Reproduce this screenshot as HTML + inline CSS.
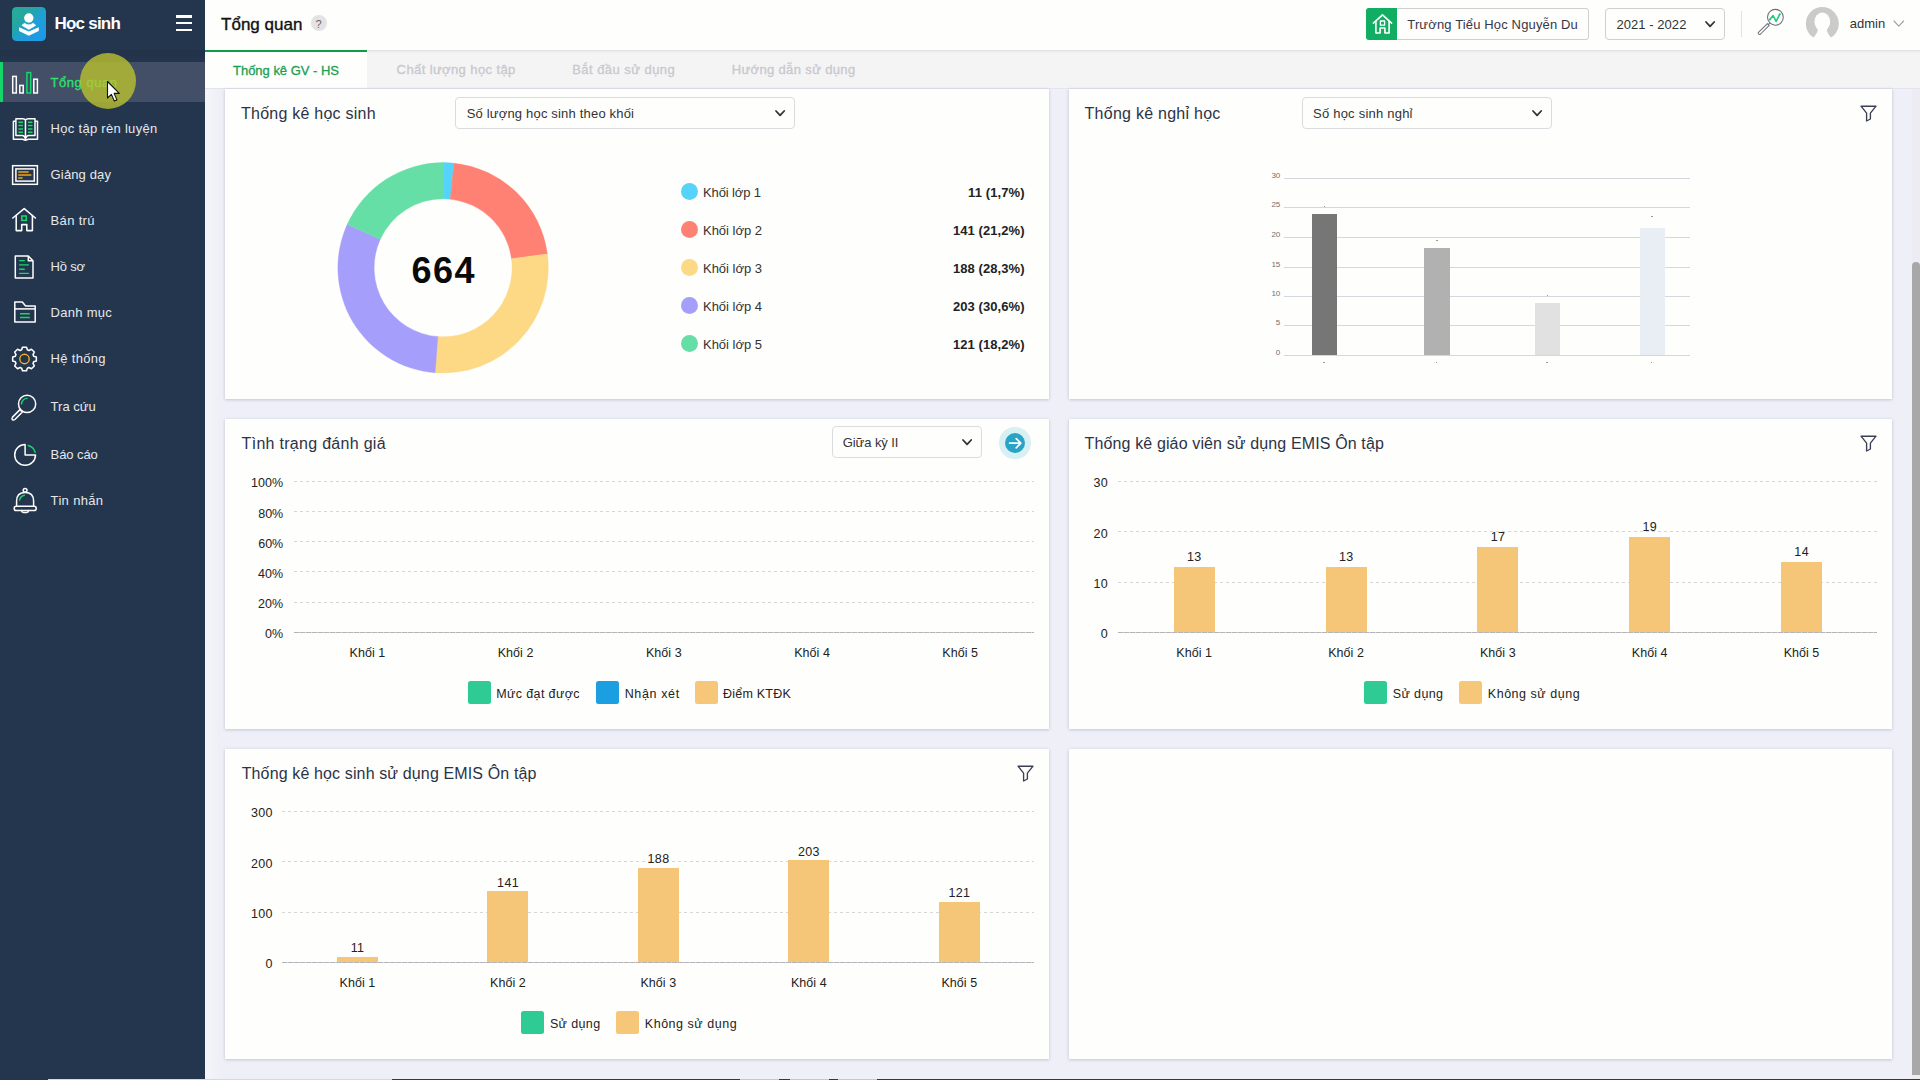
<!DOCTYPE html><html><head><meta charset="utf-8"><title>Tổng quan</title><style>
*{box-sizing:border-box;margin:0;padding:0}
html,body{width:1920px;height:1080px;overflow:hidden;background:#eff0f7;font-family:"Liberation Sans",sans-serif;}
.t{position:absolute;white-space:nowrap;}
.a{position:absolute;}
.card{position:absolute;background:#fefefc;box-shadow:0 1px 3px rgba(100,105,140,.26),0 0 3px rgba(100,105,140,.10);}
.dd{position:absolute;background:#fefefc;border:1px solid #dcdce0;border-radius:4px;}
svg{position:absolute;overflow:visible}
</style></head><body>
<div class="a" style="left:205px;top:0;width:1715px;height:50px;background:#fefefc;"></div>
<div class="a" style="left:205px;top:50px;width:1715px;height:38px;background:#f4f4f5;box-shadow:inset 0 3px 3px -2px rgba(0,0,0,.11);"></div>
<div class="a" style="left:205px;top:88px;width:1715px;height:1px;background:#e4e4f0;"></div>
<div class="a" style="left:205px;top:50px;width:162px;height:38px;background:#fefefc;border-top:2px solid #0a9d4c;"></div>
<div class="t" style="left:233.00px;top:63px;font-size:13px;line-height:15px;color:#1c9e54;font-weight:400;letter-spacing:-0.015px;-webkit-text-stroke:0.3px #1c9e54;">Thống kê GV - HS</div>
<div class="t" style="left:396.60px;top:62px;font-size:13px;line-height:15px;color:#c8c8cd;font-weight:400;letter-spacing:0.400px;-webkit-text-stroke:0.3px #c8c8cd;">Chất lượng học tập</div>
<div class="t" style="left:572.20px;top:62px;font-size:13px;line-height:15px;color:#c8c8cd;font-weight:400;letter-spacing:0.459px;-webkit-text-stroke:0.3px #c8c8cd;">Bắt đầu sử dụng</div>
<div class="t" style="left:731.70px;top:62px;font-size:13px;line-height:15px;color:#c8c8cd;font-weight:400;letter-spacing:0.360px;-webkit-text-stroke:0.3px #c8c8cd;">Hướng dẫn sử dụng</div>
<div class="t" style="left:221.00px;top:15px;font-size:17px;line-height:19px;color:#111;font-weight:400;letter-spacing:0.025px;-webkit-text-stroke:0.35px #111;">Tổng quan</div>
<div class="a" style="left:310.5px;top:15px;width:16px;height:16px;border-radius:50%;background:#e3e3e5;"></div>
<div class="t" style="left:18.60px;width:600px;text-align:center;top:18px;font-size:11px;line-height:12px;color:#666;font-weight:400;">?</div>
<div class="a" style="left:1365.5px;top:8px;width:223px;height:31.5px;border:1px solid #cfcfd4;border-radius:3px;background:#fefefc;"></div>
<div class="a" style="left:1365.5px;top:8px;width:31.5px;height:31.5px;border-radius:3px 0 0 3px;background:#10ad62;"></div>
<svg style="left:1371.6px;top:13px" width="21" height="22" viewBox="0 0 21 22" fill="none" stroke="#fff" stroke-width="1.6" stroke-linejoin="round" stroke-linecap="round">
<path d="M1.4 10.2 L10.5 1.9 L19.6 10.2"/><path d="M3.9 8.6 V20 H8.1 V15 H12.9 V20 H17.1 V8.6"/><rect x="8.4" y="8" width="4.2" height="4.2" stroke-width="1.3"/></svg>
<div class="t" style="left:1407.30px;top:17px;font-size:13px;line-height:15px;color:#383848;font-weight:400;letter-spacing:0.144px;">Trường Tiểu Học Nguyễn Du</div>
<div class="a" style="left:1605px;top:8px;width:119.5px;height:31.5px;border:1px solid #cfcfd4;border-radius:4px;background:#fefefc;"></div>
<div class="t" style="left:1616.40px;top:17px;font-size:13px;line-height:15px;color:#333;font-weight:400;letter-spacing:0.059px;">2021 - 2022</div>
<svg style="left:1703.9px;top:20.0px" width="12.2" height="8.4" viewBox="-2 -2 12.2 8.4" fill="none" stroke="#333" stroke-width="1.8" stroke-linecap="round" stroke-linejoin="round"><path d="M0 0 L4.1 4.4 L8.2 0"/></svg>
<div class="a" style="left:1741px;top:11px;width:1px;height:26px;background:#e2e2e6;"></div>
<svg style="left:0;top:0" width="1920" height="50" viewBox="0 0 1920 50" fill="none" stroke-linecap="round" stroke-linejoin="round">
<circle cx="1775.4" cy="17.3" r="7.9" stroke="#70707c" stroke-width="1.05"/>
<path d="M1769.9 23 L1768.3 24.6" stroke="#70707c" stroke-width="1.05"/>
<path d="M1767.4 23.6 L1769.2 25.4 L1760.6 34 Q1759.5 34.9 1758.6 34 Q1757.7 33.1 1758.7 32.2 Z" stroke="#70707c" stroke-width="1.05"/>
<path d="M1769.9 19.6 L1773.1 15.6 L1776.1 21.4 L1779.7 14.3" stroke="#1fcb7c" stroke-width="1.6"/>
<circle cx="1769.9" cy="19.6" r="1" fill="#1fcb7c"/><circle cx="1779.7" cy="14.3" r="1" fill="#1fcb7c"/>
</svg>
<svg style="left:0;top:0" width="1920" height="50" viewBox="0 0 1920 50"><defs><clipPath id="av"><circle cx="1822.3" cy="23.6" r="16.5"/></clipPath></defs>
<circle cx="1822.3" cy="23.6" r="16.5" fill="#cbcbcb"/>
<g fill="#fefefc"><ellipse cx="1822.3" cy="21.8" rx="7.9" ry="9.2"/><path d="M1817.6 28 Q1818.4 33 1812.5 38.4 L1811 42 H1833.6 L1832.1 38.4 Q1826.2 33 1827 28 Z"/>
<rect x="1805" y="38.6" width="35" height="4"/></g></svg>
<div class="t" style="left:1849.70px;top:16px;font-size:13px;line-height:15px;color:#333;font-weight:400;letter-spacing:0.045px;">admin</div>
<svg style="left:1892.3px;top:19.2px" width="13.6" height="9.2" viewBox="-2 -2 13.6 9.2" fill="none" stroke="#a2a2a6" stroke-width="1.15" stroke-linecap="round" stroke-linejoin="round"><path d="M0 0 L4.8 5.2 L9.6 0"/></svg>
<div class="a" style="left:0;top:0;width:205px;height:1080px;background:#24364e;"></div>
<div class="a" style="left:0;top:50px;width:205px;height:12px;background:linear-gradient(#213148,#24364e);"></div>
<div class="a" style="left:0;top:62px;width:205px;height:40px;background:#424f66;"></div>
<div class="a" style="left:0;top:62px;width:3px;height:40px;background:#14d66a;"></div>
<svg style="left:12px;top:7px" width="34" height="34" viewBox="0 0 34 34"><defs><linearGradient id="lg" x1="0" y1="0" x2="1" y2="1"><stop offset="0" stop-color="#27ad92"/><stop offset="0.36" stop-color="#25a5a6"/><stop offset="0.56" stop-color="#1f9fd6"/><stop offset="1" stop-color="#1e97ea"/></linearGradient></defs>
<rect width="34" height="34" rx="4.6" fill="url(#lg)"/>
<circle cx="16.8" cy="11" r="4.7" fill="#fefefc"/>
<path d="M10 18.5 Q10 18 10.6 17.6 L12.7 16.2 A6 6 0 0 0 20.9 16.2 L23 17.6 Q23.7 18 23.6 18.5 L16.8 22.5 Z" fill="#fefefc" stroke="#fefefc" stroke-width="0.6" stroke-linejoin="round"/>
<path d="M7 20.2 L16.8 24.6 L26.8 20.2 V24 L16.8 28.7 L7 24 Z" fill="#fefefc"/>
</svg>
<div class="t" style="left:54.40px;top:14px;font-size:17px;line-height:19px;color:#fdfdfd;font-weight:700;letter-spacing:-0.757px;">Học sinh</div>
<div class="a" style="left:176px;top:15px;width:16px;height:2.5px;background:#fdfdfd;"></div>
<div class="a" style="left:176px;top:21.8px;width:16px;height:2.5px;background:#fdfdfd;"></div>
<div class="a" style="left:176px;top:28.6px;width:16px;height:2.5px;background:#fdfdfd;"></div>
<svg style="left:0;top:0" width="60" height="110" viewBox="0 0 60 110" fill="none" stroke="#fdfdfd" stroke-width="1.5">
<rect x="12.7" y="76.4" width="3.6" height="16.6"/><rect x="19.8" y="85.4" width="3.4" height="7.6"/>
<rect x="26.9" y="72.6" width="3.8" height="20.4" stroke="#14d66a"/><rect x="33.8" y="79.2" width="3.6" height="13.8"/></svg>
<svg style="left:0;top:100px" width="60" height="50" viewBox="0 100 60 50" fill="none" stroke="#fdfdfd" stroke-width="1.5" stroke-linejoin="round">
<path d="M15.7 121.3 H13.4 V139.3 H22.5 L25.45 140.3 L28.4 139.3 H37.5 V121.3 H35.2"/>
<path d="M25.45 120 Q24.6 118.7 22.8 118.7 H15.9 V135.6 H22 Q24.6 135.6 25.45 139.4 Q26.3 135.6 28.9 135.6 H35 V118.7 H28.1 Q26.3 118.7 25.45 120 V139"/>
<g stroke="#14d66a" stroke-width="1.5"><path d="M18.4 122.3H23M18.4 125.6H23M18.4 128.9H23M18.4 132.2H23M27.9 122.3H32.5M27.9 125.6H32.5M27.9 128.9H32.5M27.9 132.2H32.5"/></g></svg>
<svg style="left:0;top:150px" width="60" height="50" viewBox="0 150 60 50" fill="none" stroke="#fdfdfd" stroke-width="1.5">
<rect x="12.6" y="165.7" width="24.8" height="18.6"/><rect x="15.9" y="168.9" width="18.4" height="12.2"/>
<g stroke="#eaa51c" stroke-width="1.5"><path d="M18.2 172H28.7M18.2 175H31.4M18.2 178H22.6"/></g></svg>
<svg style="left:0;top:195px" width="60" height="50" viewBox="0 195 60 50" fill="none" stroke="#fdfdfd" stroke-width="1.55" stroke-linejoin="round" stroke-linecap="round">
<path d="M12.8 218 L24.2 208.6 L35.4 218"/><path d="M16.2 215.6 V230.6 H21.7 V224.6 H26.8 V230.6 H32.4 V215.6"/>
<rect x="21.8" y="216" width="4.4" height="4.4" stroke="#14d66a" stroke-linejoin="miter"/></svg>
<svg style="left:0;top:245px" width="60" height="45" viewBox="0 245 60 45" fill="none" stroke="#fdfdfd" stroke-width="1.5" stroke-linejoin="round">
<path d="M15.3 256.1 H28.3 L33 260.8 V277.9 H15.3 Z"/><path d="M28.3 256.1 V260.8 H33"/>
<g stroke="#14d66a" stroke-width="1.4"><path d="M19.1 260.6H24.8M19.1 264.9H28.9M19.1 269.2H24.8M19.1 273.4H28.9"/></g></svg>
<svg style="left:0;top:290px" width="60" height="45" viewBox="0 290 60 45" fill="none" stroke="#fdfdfd" stroke-width="1.5" stroke-linejoin="round">
<path d="M14.8 301.9 H22.3 L25.6 305.9 H35.2 V322.1 H14.8 Z"/><path d="M14.8 308.9 H35.2"/>
<g stroke="#14d66a" stroke-width="1.4"><path d="M20 313.7H29.8M20 317.5H29.8"/></g></svg>
<svg style="left:0;top:335px" width="60" height="50" viewBox="0 335 60 50" fill="none" stroke="#fdfdfd" stroke-width="1.55" stroke-linejoin="round">
<path d="M21.66 349.83 L22.47 347.17 L26.53 347.17 L27.34 349.83 L28.98 350.51 L31.43 349.20 L34.30 352.07 L32.99 354.52 L33.67 356.16 L36.33 356.97 L36.33 361.03 L33.67 361.84 L32.99 363.48 L34.30 365.93 L31.43 368.80 L28.98 367.49 L27.34 368.17 L26.53 370.83 L22.47 370.83 L21.66 368.17 L20.02 367.49 L17.57 368.80 L14.70 365.93 L16.01 363.48 L15.33 361.84 L12.67 361.03 L12.67 356.97 L15.33 356.16 L16.01 354.52 L14.70 352.07 L17.57 349.20 L20.02 350.51 Z"/><circle cx="24.5" cy="359" r="4.7" stroke="#f0b323" stroke-width="1.4"/></svg>
<svg style="left:0;top:385px" width="60" height="45" viewBox="0 385 60 45" fill="none" stroke="#fdfdfd" stroke-width="1.5" stroke-linecap="round">
<circle cx="27.1" cy="403.9" r="8.6"/>
<path d="M20 409.6 L22.4 412 L14.9 419.5 Q13.4 420.6 12.4 419.6 Q11.4 418.6 12.5 417.1 Z" stroke-linejoin="round"/>
<path d="M21.6 403.9 A5.5 5.5 0 0 1 27.1 398.4" stroke="#14d66a" stroke-width="1.4"/></svg>
<svg style="left:0;top:430px" width="60" height="45" viewBox="0 430 60 45" fill="none" stroke="#fdfdfd" stroke-width="1.5" stroke-linecap="round" stroke-linejoin="round">
<path d="M25.1 444.5 A10.4 10.4 0 1 0 35.5 454.9 H25.1 Z"/>
<path d="M28.2 445.5 A10.2 10.2 0 0 1 35.2 452.3" stroke="#14d66a" stroke-width="1.4"/></svg>
<svg style="left:0;top:475px" width="60" height="50" viewBox="0 475 60 50" fill="none" stroke="#fdfdfd" stroke-width="1.5" stroke-linecap="round" stroke-linejoin="round">
<circle cx="25.1" cy="490.3" r="1.9"/>
<path d="M16.6 506.3 V501 Q16.6 492.4 25.1 492.4 Q33.6 492.4 33.6 501 V506.3"/>
<rect x="14.2" y="506.3" width="22" height="4.2" rx="2.1"/>
<path d="M21.6 510.6 Q21.8 512.4 23.4 512.4 H26.8 Q28.4 512.4 28.6 510.6"/>
<path d="M19.6 500 A6 6 0 0 1 24.4 495.2" stroke="#14d66a" stroke-width="1.4"/></svg>
<div class="t" style="left:50.60px;top:75px;font-size:13px;line-height:15px;color:#2fe070;font-weight:400;letter-spacing:0.541px;-webkit-text-stroke:0.3px #2fe070;">Tổng quan</div>
<div class="t" style="left:50.60px;top:121px;font-size:13px;line-height:15px;color:#e6e8ec;font-weight:400;letter-spacing:0.293px;">Học tập rèn luyện</div>
<div class="t" style="left:50.60px;top:167px;font-size:13px;line-height:15px;color:#e6e8ec;font-weight:400;letter-spacing:0.142px;">Giảng dạy</div>
<div class="t" style="left:50.60px;top:213px;font-size:13px;line-height:15px;color:#e6e8ec;font-weight:400;letter-spacing:0.330px;">Bán trú</div>
<div class="t" style="left:50.60px;top:259px;font-size:13px;line-height:15px;color:#e6e8ec;font-weight:400;letter-spacing:-0.191px;">Hồ sơ</div>
<div class="t" style="left:50.60px;top:305px;font-size:13px;line-height:15px;color:#e6e8ec;font-weight:400;letter-spacing:0.279px;">Danh mục</div>
<div class="t" style="left:50.60px;top:351px;font-size:13px;line-height:15px;color:#e6e8ec;font-weight:400;letter-spacing:0.319px;">Hệ thống</div>
<div class="t" style="left:50.60px;top:399px;font-size:13px;line-height:15px;color:#e6e8ec;font-weight:400;letter-spacing:0.023px;">Tra cứu</div>
<div class="t" style="left:50.60px;top:447px;font-size:13px;line-height:15px;color:#e6e8ec;font-weight:400;letter-spacing:-0.084px;">Báo cáo</div>
<div class="t" style="left:50.60px;top:493px;font-size:13px;line-height:15px;color:#e6e8ec;font-weight:400;letter-spacing:0.342px;">Tin nhắn</div>
<div class="a" style="left:79.5px;top:53px;width:56px;height:56px;border-radius:50%;background:rgba(190,196,46,.78);"></div>
<svg style="left:106px;top:80px" width="16" height="24" viewBox="0 0 16 24"><path d="M1.5 1.5 V18 L5.4 14.4 L8.3 21 L10.9 19.9 L8.1 13.4 H13.3 Z" fill="#fff" stroke="#111" stroke-width="1.1" stroke-linejoin="round"/></svg>
<div class="a" style="left:205px;top:89px;width:14px;height:991px;background:linear-gradient(90deg,#f5f5f9,#eff0f7);"></div>
<div class="card" style="left:225px;top:89px;width:824px;height:310px;"></div>
<div class="card" style="left:1069px;top:89px;width:823px;height:310px;"></div>
<div class="card" style="left:225px;top:419px;width:824px;height:310px;"></div>
<div class="card" style="left:1069px;top:419px;width:823px;height:310px;"></div>
<div class="card" style="left:225px;top:749px;width:824px;height:310px;"></div>
<div class="card" style="left:1069px;top:749px;width:823px;height:310px;"></div>
<div class="t" style="left:241.00px;top:105px;font-size:16px;line-height:17px;color:#2c3347;font-weight:400;letter-spacing:0.241px;">Thống kê học sinh</div>
<div class="dd" style="left:455.3px;top:97.3px;width:339.6px;height:31.3px;"></div>
<div class="t" style="left:466.70px;top:106px;font-size:13px;line-height:15px;color:#333;font-weight:400;letter-spacing:0.185px;">Số lượng học sinh theo khối</div>
<svg style="left:774.2px;top:109.0px" width="12.2" height="8.4" viewBox="-2 -2 12.2 8.4" fill="none" stroke="#333" stroke-width="1.8" stroke-linecap="round" stroke-linejoin="round"><path d="M0 0 L4.1 4.4 L8.2 0"/></svg>
<svg style="left:0;top:0" width="1920" height="1080" viewBox="0 0 1920 1080"><path d="M443.10 162.60 A105.2 105.2 0 0 1 454.03 163.17 L450.27 199.17 A69.0 69.0 0 0 0 443.10 198.80 Z" fill="#55d4fb" stroke="#55d4fb" stroke-width="0.4"/><path d="M454.03 163.17 A105.2 105.2 0 0 1 547.38 253.90 L511.50 258.69 A69.0 69.0 0 0 0 450.27 199.17 Z" fill="#fe8173" stroke="#fe8173" stroke-width="0.4"/><path d="M547.38 253.90 A105.2 105.2 0 0 1 435.14 372.70 L437.88 336.60 A69.0 69.0 0 0 0 511.50 258.69 Z" fill="#fdd885" stroke="#fdd885" stroke-width="0.4"/><path d="M435.14 372.70 A105.2 105.2 0 0 1 347.29 224.35 L380.26 239.30 A69.0 69.0 0 0 0 437.88 336.60 Z" fill="#a59efb" stroke="#a59efb" stroke-width="0.4"/><path d="M347.29 224.35 A105.2 105.2 0 0 1 443.10 162.60 L443.10 198.80 A69.0 69.0 0 0 0 380.26 239.30 Z" fill="#65dfa6" stroke="#65dfa6" stroke-width="0.4"/></svg>
<div class="t" style="left:143.83px;width:600px;text-align:center;top:250px;font-size:36px;line-height:41px;color:#0a0a0a;font-weight:700;letter-spacing:1.461px;">664</div>
<div class="a" style="left:680.8px;top:183.3px;width:17px;height:17px;border-radius:50%;background:#55d4fb;"></div>
<div class="t" style="left:703.00px;top:185px;font-size:13px;line-height:15px;color:#333;font-weight:400;letter-spacing:-0.125px;">Khối lớp 1</div>
<div class="t" style="right:895.39px;top:185px;font-size:13px;line-height:15px;color:#222;font-weight:700;letter-spacing:0.105px;">11 (1,7%)</div>
<div class="a" style="left:680.8px;top:221.3px;width:17px;height:17px;border-radius:50%;background:#fe8173;"></div>
<div class="t" style="left:703.00px;top:223px;font-size:13px;line-height:15px;color:#333;font-weight:400;letter-spacing:-0.014px;">Khối lớp 2</div>
<div class="t" style="right:895.43px;top:223px;font-size:13px;line-height:15px;color:#222;font-weight:700;letter-spacing:0.067px;">141 (21,2%)</div>
<div class="a" style="left:680.8px;top:259.3px;width:17px;height:17px;border-radius:50%;background:#fdd885;"></div>
<div class="t" style="left:703.00px;top:261px;font-size:13px;line-height:15px;color:#333;font-weight:400;letter-spacing:-0.014px;">Khối lớp 3</div>
<div class="t" style="right:895.43px;top:261px;font-size:13px;line-height:15px;color:#222;font-weight:700;letter-spacing:0.067px;">188 (28,3%)</div>
<div class="a" style="left:680.8px;top:297.3px;width:17px;height:17px;border-radius:50%;background:#a59efb;"></div>
<div class="t" style="left:703.00px;top:299px;font-size:13px;line-height:15px;color:#333;font-weight:400;letter-spacing:-0.014px;">Khối lớp 4</div>
<div class="t" style="right:895.43px;top:299px;font-size:13px;line-height:15px;color:#222;font-weight:700;letter-spacing:0.067px;">203 (30,6%)</div>
<div class="a" style="left:680.8px;top:335.3px;width:17px;height:17px;border-radius:50%;background:#65dfa6;"></div>
<div class="t" style="left:703.00px;top:337px;font-size:13px;line-height:15px;color:#333;font-weight:400;letter-spacing:-0.014px;">Khối lớp 5</div>
<div class="t" style="right:895.43px;top:337px;font-size:13px;line-height:15px;color:#222;font-weight:700;letter-spacing:0.067px;">121 (18,2%)</div>
<div class="t" style="left:1084.60px;top:105px;font-size:16px;line-height:17px;color:#2c3347;font-weight:400;letter-spacing:0.253px;">Thống kê nghỉ học</div>
<div class="dd" style="left:1302px;top:97.3px;width:249.8px;height:31.3px;"></div>
<div class="t" style="left:1313.00px;top:106px;font-size:13px;line-height:15px;color:#333;font-weight:400;letter-spacing:0.225px;">Số học sinh nghỉ</div>
<svg style="left:1531.1000000000001px;top:109.0px" width="12.2" height="8.4" viewBox="-2 -2 12.2 8.4" fill="none" stroke="#333" stroke-width="1.8" stroke-linecap="round" stroke-linejoin="round"><path d="M0 0 L4.1 4.4 L8.2 0"/></svg>
<svg style="left:1859.8px;top:104.6px" width="17" height="17" viewBox="0 0 17 17" fill="none" stroke="#3a3f52" stroke-width="1.35" stroke-linejoin="round"><path d="M1 1.2 H16 L10.4 8.2 V14 L6.6 16 V8.2 Z"/></svg>
<div class="a" style="left:1284px;top:177.6px;width:406px;height:1px;background:#d6d6df;"></div>
<div class="t" style="right:639.70px;top:171px;font-size:8px;line-height:9px;color:#6f6f6f;font-weight:400;">30</div>
<div class="a" style="left:1284px;top:207.3px;width:406px;height:1px;background:#d6d6df;"></div>
<div class="t" style="right:639.70px;top:200px;font-size:8px;line-height:9px;color:#6f6f6f;font-weight:400;">25</div>
<div class="a" style="left:1284px;top:236.9px;width:406px;height:1px;background:#d6d6df;"></div>
<div class="t" style="right:639.70px;top:230px;font-size:8px;line-height:9px;color:#6f6f6f;font-weight:400;">20</div>
<div class="a" style="left:1284px;top:266.5px;width:406px;height:1px;background:#d6d6df;"></div>
<div class="t" style="right:639.70px;top:260px;font-size:8px;line-height:9px;color:#6f6f6f;font-weight:400;">15</div>
<div class="a" style="left:1284px;top:295.9px;width:406px;height:1px;background:#d6d6df;"></div>
<div class="t" style="right:639.70px;top:289px;font-size:8px;line-height:9px;color:#6f6f6f;font-weight:400;">10</div>
<div class="a" style="left:1284px;top:325.2px;width:406px;height:1px;background:#d6d6df;"></div>
<div class="t" style="right:639.70px;top:318px;font-size:8px;line-height:9px;color:#6f6f6f;font-weight:400;">5</div>
<div class="a" style="left:1284px;top:354.7px;width:406px;height:1px;background:#d6d6df;"></div>
<div class="t" style="right:639.70px;top:348px;font-size:8px;line-height:9px;color:#6f6f6f;font-weight:400;">0</div>
<div class="a" style="left:1312px;top:214.3px;width:25.3px;height:140.9px;background:#767676;"></div>
<div class="a" style="left:1424.2px;top:247.8px;width:25.6px;height:107.4px;background:#b1b1b1;"></div>
<div class="a" style="left:1534.8px;top:302.8px;width:25.2px;height:52.4px;background:#e1e1e1;"></div>
<div class="a" style="left:1639.7px;top:228.1px;width:25.3px;height:127.1px;background:#e9eef5;"></div>
<div class="a" style="left:1323.5px;top:206.3px;width:1.6px;height:0.8px;background:#999;"></div>
<div class="a" style="left:1436px;top:239.6px;width:1.6px;height:0.8px;background:#999;"></div>
<div class="a" style="left:1546.5px;top:294.5px;width:1.6px;height:0.8px;background:#999;"></div>
<div class="a" style="left:1651px;top:216.4px;width:1.6px;height:0.8px;background:#999;"></div>
<div class="a" style="left:1323.2px;top:361.5px;width:1.6px;height:0.8px;background:#999;"></div>
<div class="a" style="left:1435.6px;top:361.5px;width:1.6px;height:0.8px;background:#999;"></div>
<div class="a" style="left:1546px;top:361.5px;width:1.6px;height:0.8px;background:#999;"></div>
<div class="a" style="left:1650.7px;top:361.5px;width:1.6px;height:0.8px;background:#999;"></div>
<div class="t" style="left:241.60px;top:435px;font-size:16px;line-height:17px;color:#2c3347;font-weight:400;letter-spacing:0.291px;">Tình trạng đánh giá</div>
<div class="dd" style="left:832.3px;top:426.4px;width:149.4px;height:31.3px;"></div>
<div class="t" style="left:842.80px;top:435px;font-size:13px;line-height:15px;color:#333;font-weight:400;letter-spacing:-0.088px;">Giữa kỳ II</div>
<svg style="left:960.9999999999999px;top:438.09999999999997px" width="12.2" height="8.4" viewBox="-2 -2 12.2 8.4" fill="none" stroke="#333" stroke-width="1.8" stroke-linecap="round" stroke-linejoin="round"><path d="M0 0 L4.1 4.4 L8.2 0"/></svg>
<div class="a" style="left:999.3px;top:427.1px;width:31.5px;height:31.5px;border-radius:50%;background:#d8f0f4;"></div>
<div class="a" style="left:1004.8px;top:432.7px;width:20.4px;height:20.4px;border-radius:50%;background:#27a4c6;"></div>
<svg style="left:1004.8px;top:432.7px" width="20.4" height="20.4" viewBox="0 0 20.4 20.4" fill="none" stroke="#fff" stroke-width="1.7" stroke-linecap="round" stroke-linejoin="round"><path d="M4.6 10.2 H15.4 M11.2 5.6 L15.8 10.2 L11.2 14.8"/></svg>
<div class="a" style="left:293.5px;top:481px;width:740.9px;height:1px;background:repeating-linear-gradient(90deg,#d6d6d9 0 3.4px,transparent 3.4px 6px);"></div>
<div class="t" style="right:1636.76px;top:476px;font-size:12.5px;line-height:14px;color:#222;font-weight:400;letter-spacing:0.039px;">100%</div>
<div class="a" style="left:293.5px;top:511px;width:740.9px;height:1px;background:repeating-linear-gradient(90deg,#d6d6d9 0 3.4px,transparent 3.4px 6px);"></div>
<div class="t" style="right:1636.87px;top:507px;font-size:12.5px;line-height:14px;color:#222;font-weight:400;letter-spacing:-0.066px;">80%</div>
<div class="a" style="left:293.5px;top:541px;width:740.9px;height:1px;background:repeating-linear-gradient(90deg,#d6d6d9 0 3.4px,transparent 3.4px 6px);"></div>
<div class="t" style="right:1636.87px;top:537px;font-size:12.5px;line-height:14px;color:#222;font-weight:400;letter-spacing:-0.066px;">60%</div>
<div class="a" style="left:293.5px;top:571px;width:740.9px;height:1px;background:repeating-linear-gradient(90deg,#d6d6d9 0 3.4px,transparent 3.4px 6px);"></div>
<div class="t" style="right:1636.77px;top:567px;font-size:12.5px;line-height:14px;color:#222;font-weight:400;letter-spacing:0.034px;">40%</div>
<div class="a" style="left:293.5px;top:602px;width:740.9px;height:1px;background:repeating-linear-gradient(90deg,#d6d6d9 0 3.4px,transparent 3.4px 6px);"></div>
<div class="t" style="right:1636.77px;top:597px;font-size:12.5px;line-height:14px;color:#222;font-weight:400;letter-spacing:0.034px;">20%</div>
<div class="a" style="left:293.5px;top:632px;width:740.9px;height:1px;background:repeating-linear-gradient(90deg,#b4b4b8 0 5px,#d4d4d8 5px 6px);"></div>
<div class="t" style="right:1636.58px;top:627px;font-size:12.5px;line-height:14px;color:#222;font-weight:400;letter-spacing:0.222px;">0%</div>
<div class="t" style="left:67.42px;width:600px;text-align:center;top:646px;font-size:12.5px;line-height:14px;color:#222;font-weight:400;letter-spacing:0.049px;">Khối 1</div>
<div class="t" style="left:215.62px;width:600px;text-align:center;top:646px;font-size:12.5px;line-height:14px;color:#222;font-weight:400;letter-spacing:0.049px;">Khối 2</div>
<div class="t" style="left:363.82px;width:600px;text-align:center;top:646px;font-size:12.5px;line-height:14px;color:#222;font-weight:400;letter-spacing:0.049px;">Khối 3</div>
<div class="t" style="left:512.02px;width:600px;text-align:center;top:646px;font-size:12.5px;line-height:14px;color:#222;font-weight:400;letter-spacing:0.049px;">Khối 4</div>
<div class="t" style="left:660.22px;width:600px;text-align:center;top:646px;font-size:12.5px;line-height:14px;color:#222;font-weight:400;letter-spacing:0.049px;">Khối 5</div>
<div class="a" style="left:467.6px;top:680.9px;width:23px;height:22.8px;border-radius:2.5px;background:#2fcb94;"></div>
<div class="t" style="left:496.30px;top:687px;font-size:12.5px;line-height:14px;color:#222;font-weight:400;letter-spacing:0.370px;">Mức đạt được</div>
<div class="a" style="left:595.8px;top:680.9px;width:23px;height:22.8px;border-radius:2.5px;background:#1b9fe0;"></div>
<div class="t" style="left:624.70px;top:687px;font-size:12.5px;line-height:14px;color:#222;font-weight:400;letter-spacing:0.638px;">Nhận xét</div>
<div class="a" style="left:695px;top:680.9px;width:23px;height:22.8px;border-radius:2.5px;background:#f6c779;"></div>
<div class="t" style="left:723.00px;top:687px;font-size:12.5px;line-height:14px;color:#222;font-weight:400;letter-spacing:0.227px;">Điểm KTĐK</div>
<div class="t" style="left:1084.60px;top:435px;font-size:16px;line-height:17px;color:#2c3347;font-weight:400;letter-spacing:0.129px;">Thống kê giáo viên sử dụng EMIS Ôn tập</div>
<svg style="left:1859.8px;top:434.6px" width="17" height="17" viewBox="0 0 17 17" fill="none" stroke="#3a3f52" stroke-width="1.35" stroke-linejoin="round"><path d="M1 1.2 H16 L10.4 8.2 V14 L6.6 16 V8.2 Z"/></svg>
<div class="a" style="left:1118.3px;top:481px;width:759.1px;height:1px;background:repeating-linear-gradient(90deg,#d6d6d9 0 3.4px,transparent 3.4px 6px);"></div>
<div class="t" style="right:811.85px;top:476px;font-size:12.5px;line-height:14px;color:#222;font-weight:400;letter-spacing:0.350px;">30</div>
<div class="a" style="left:1118.3px;top:531px;width:759.1px;height:1px;background:repeating-linear-gradient(90deg,#d6d6d9 0 3.4px,transparent 3.4px 6px);"></div>
<div class="t" style="right:811.85px;top:527px;font-size:12.5px;line-height:14px;color:#222;font-weight:400;letter-spacing:0.350px;">20</div>
<div class="a" style="left:1118.3px;top:582px;width:759.1px;height:1px;background:repeating-linear-gradient(90deg,#d6d6d9 0 3.4px,transparent 3.4px 6px);"></div>
<div class="t" style="right:811.85px;top:577px;font-size:12.5px;line-height:14px;color:#222;font-weight:400;letter-spacing:0.350px;">10</div>
<div class="t" style="right:811.85px;top:627px;font-size:12.5px;line-height:14px;color:#222;font-weight:400;letter-spacing:0.350px;">0</div>
<div class="a" style="left:1173.7px;top:566.9px;width:41px;height:65.5px;background:#f6c678;"></div>
<div class="t" style="left:894.38px;width:600px;text-align:center;top:550px;font-size:12.5px;line-height:14px;color:#222;font-weight:400;letter-spacing:0.350px;">13</div>
<div class="t" style="left:894.23px;width:600px;text-align:center;top:646px;font-size:12.5px;line-height:14px;color:#222;font-weight:400;letter-spacing:0.049px;">Khối 1</div>
<div class="a" style="left:1325.5px;top:566.9px;width:41px;height:65.5px;background:#f6c678;"></div>
<div class="t" style="left:1046.20px;width:600px;text-align:center;top:550px;font-size:12.5px;line-height:14px;color:#222;font-weight:400;letter-spacing:0.350px;">13</div>
<div class="t" style="left:1046.05px;width:600px;text-align:center;top:646px;font-size:12.5px;line-height:14px;color:#222;font-weight:400;letter-spacing:0.049px;">Khối 2</div>
<div class="a" style="left:1477.3px;top:546.7px;width:41px;height:85.7px;background:#f6c678;"></div>
<div class="t" style="left:1198.02px;width:600px;text-align:center;top:530px;font-size:12.5px;line-height:14px;color:#222;font-weight:400;letter-spacing:0.350px;">17</div>
<div class="t" style="left:1197.87px;width:600px;text-align:center;top:646px;font-size:12.5px;line-height:14px;color:#222;font-weight:400;letter-spacing:0.049px;">Khối 3</div>
<div class="a" style="left:1629.2px;top:536.6px;width:41px;height:95.8px;background:#f6c678;"></div>
<div class="t" style="left:1349.85px;width:600px;text-align:center;top:520px;font-size:12.5px;line-height:14px;color:#222;font-weight:400;letter-spacing:0.350px;">19</div>
<div class="t" style="left:1349.69px;width:600px;text-align:center;top:646px;font-size:12.5px;line-height:14px;color:#222;font-weight:400;letter-spacing:0.049px;">Khối 4</div>
<div class="a" style="left:1781.0px;top:561.8px;width:41px;height:70.6px;background:#f6c678;"></div>
<div class="t" style="left:1501.66px;width:600px;text-align:center;top:545px;font-size:12.5px;line-height:14px;color:#222;font-weight:400;letter-spacing:0.350px;">14</div>
<div class="t" style="left:1501.51px;width:600px;text-align:center;top:646px;font-size:12.5px;line-height:14px;color:#222;font-weight:400;letter-spacing:0.049px;">Khối 5</div>
<div class="a" style="left:1118.3px;top:632px;width:759.1px;height:1px;background:repeating-linear-gradient(90deg,#b4b4b8 0 5px,#d4d4d8 5px 6px);"></div>
<div class="a" style="left:1364.1px;top:680.9px;width:23px;height:22.8px;border-radius:2.5px;background:#2fcb94;"></div>
<div class="t" style="left:1392.80px;top:687px;font-size:12.5px;line-height:14px;color:#222;font-weight:400;letter-spacing:0.367px;">Sử dụng</div>
<div class="a" style="left:1459.2px;top:680.9px;width:23px;height:22.8px;border-radius:2.5px;background:#f6c779;"></div>
<div class="t" style="left:1487.80px;top:687px;font-size:12.5px;line-height:14px;color:#222;font-weight:400;letter-spacing:0.522px;">Không sử dụng</div>
<div class="t" style="left:241.70px;top:765px;font-size:16px;line-height:17px;color:#2c3347;font-weight:400;letter-spacing:0.131px;">Thống kê học sinh sử dụng EMIS Ôn tập</div>
<svg style="left:1016.8px;top:764.6px" width="17" height="17" viewBox="0 0 17 17" fill="none" stroke="#3a3f52" stroke-width="1.35" stroke-linejoin="round"><path d="M1 1.2 H16 L10.4 8.2 V14 L6.6 16 V8.2 Z"/></svg>
<div class="a" style="left:282.2px;top:811px;width:752.3px;height:1px;background:repeating-linear-gradient(90deg,#d6d6d9 0 3.4px,transparent 3.4px 6px);"></div>
<div class="t" style="right:1647.15px;top:806px;font-size:12.5px;line-height:14px;color:#222;font-weight:400;letter-spacing:0.350px;">300</div>
<div class="a" style="left:282.2px;top:861px;width:752.3px;height:1px;background:repeating-linear-gradient(90deg,#d6d6d9 0 3.4px,transparent 3.4px 6px);"></div>
<div class="t" style="right:1647.15px;top:857px;font-size:12.5px;line-height:14px;color:#222;font-weight:400;letter-spacing:0.350px;">200</div>
<div class="a" style="left:282.2px;top:912px;width:752.3px;height:1px;background:repeating-linear-gradient(90deg,#d6d6d9 0 3.4px,transparent 3.4px 6px);"></div>
<div class="t" style="right:1647.15px;top:907px;font-size:12.5px;line-height:14px;color:#222;font-weight:400;letter-spacing:0.350px;">100</div>
<div class="t" style="right:1647.15px;top:957px;font-size:12.5px;line-height:14px;color:#222;font-weight:400;letter-spacing:0.350px;">0</div>
<div class="a" style="left:336.9px;top:956.9px;width:41px;height:5.5px;background:#f6c678;"></div>
<div class="t" style="left:57.60px;width:600px;text-align:center;top:941px;font-size:12.5px;line-height:14px;color:#222;font-weight:400;letter-spacing:0.350px;">11</div>
<div class="t" style="left:57.45px;width:600px;text-align:center;top:976px;font-size:12.5px;line-height:14px;color:#222;font-weight:400;letter-spacing:0.049px;">Khối 1</div>
<div class="a" style="left:487.4px;top:891.4px;width:41px;height:71.0px;background:#f6c678;"></div>
<div class="t" style="left:208.06px;width:600px;text-align:center;top:876px;font-size:12.5px;line-height:14px;color:#222;font-weight:400;letter-spacing:0.350px;">141</div>
<div class="t" style="left:207.91px;width:600px;text-align:center;top:976px;font-size:12.5px;line-height:14px;color:#222;font-weight:400;letter-spacing:0.049px;">Khối 2</div>
<div class="a" style="left:637.8px;top:867.7px;width:41px;height:94.7px;background:#f6c678;"></div>
<div class="t" style="left:358.52px;width:600px;text-align:center;top:852px;font-size:12.5px;line-height:14px;color:#222;font-weight:400;letter-spacing:0.350px;">188</div>
<div class="t" style="left:358.37px;width:600px;text-align:center;top:976px;font-size:12.5px;line-height:14px;color:#222;font-weight:400;letter-spacing:0.049px;">Khối 3</div>
<div class="a" style="left:788.3px;top:860.2px;width:41px;height:102.2px;background:#f6c678;"></div>
<div class="t" style="left:508.98px;width:600px;text-align:center;top:845px;font-size:12.5px;line-height:14px;color:#222;font-weight:400;letter-spacing:0.350px;">203</div>
<div class="t" style="left:508.83px;width:600px;text-align:center;top:976px;font-size:12.5px;line-height:14px;color:#222;font-weight:400;letter-spacing:0.049px;">Khối 4</div>
<div class="a" style="left:938.8px;top:901.5px;width:41px;height:60.9px;background:#f6c678;"></div>
<div class="t" style="left:659.44px;width:600px;text-align:center;top:886px;font-size:12.5px;line-height:14px;color:#222;font-weight:400;letter-spacing:0.350px;">121</div>
<div class="t" style="left:659.29px;width:600px;text-align:center;top:976px;font-size:12.5px;line-height:14px;color:#222;font-weight:400;letter-spacing:0.049px;">Khối 5</div>
<div class="a" style="left:282.2px;top:962px;width:752.3px;height:1px;background:repeating-linear-gradient(90deg,#b4b4b8 0 5px,#d4d4d8 5px 6px);"></div>
<div class="a" style="left:521.2px;top:1011.2px;width:23px;height:22.8px;border-radius:2.5px;background:#2fcb94;"></div>
<div class="t" style="left:549.90px;top:1017px;font-size:12.5px;line-height:14px;color:#222;font-weight:400;letter-spacing:0.367px;">Sử dụng</div>
<div class="a" style="left:616.3px;top:1011.2px;width:23px;height:22.8px;border-radius:2.5px;background:#f6c779;"></div>
<div class="t" style="left:644.80px;top:1017px;font-size:12.5px;line-height:14px;color:#222;font-weight:400;letter-spacing:0.522px;">Không sử dụng</div>
<div class="a" style="left:1912px;top:89px;width:8px;height:991px;background:#ececf2;"></div>
<div class="a" style="left:1912px;top:262px;width:8px;height:813px;background:#a8a8a8;border-radius:4px 4px 0 0;"></div>
<div class="a" style="left:48px;top:1079px;width:344px;height:1px;background:#d8d8d8;"></div>
<div class="a" style="left:392px;top:1079px;width:1528px;height:1px;background:#2c3b40;"></div>
<div class="a" style="left:740px;top:1079px;width:39px;height:1px;background:#9fd3ee;"></div>
<div class="a" style="left:790px;top:1079px;width:39px;height:1px;background:#9fd3ee;"></div>
<div class="a" style="left:838px;top:1079px;width:39px;height:1px;background:#9fd3ee;"></div>
</body></html>
